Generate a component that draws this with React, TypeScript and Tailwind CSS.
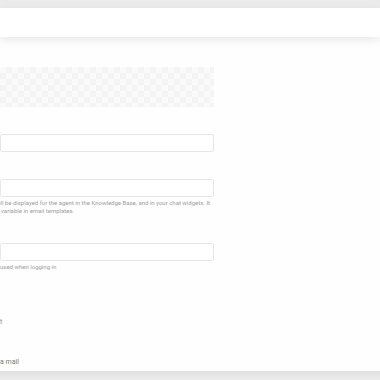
import React from 'react';

const Field = ({ className = '' }: { className?: string }) => (
  <div className={`h-[18px] w-[214px] rounded-[2px] border border-[#e6e6e6] bg-white ${className}`} />
);

const App = () => {
  return (
    <div className="flex h-[380px] w-[380px] flex-col overflow-hidden bg-[#ebebeb] font-['Roboto',sans-serif]">
      <div className="h-[8px] shrink-0 bg-[#ebebeb]" />
      <header className="relative z-10 h-[29px] shrink-0 bg-white shadow-[0_3px_10px_rgba(0,0,0,0.09)]" />
      <main className="flex h-[334px] shrink-0 flex-col bg-[#fefefe]">
        <div className="mt-[30px] h-[40px] w-[214px] bg-[repeating-conic-gradient(#f4f4f4_0%_25%,#fafafa_0%_50%)] bg-[length:12px_12px]" />
        <Field className="mt-[27px]" />
        <Field className="mt-[27px]" />
        <div className="mt-[2px] text-[6px] leading-[8px] text-[#a0a0a0]">
          <p className="-ml-[1px] whitespace-nowrap">
            ill be displayed for the agent in the Knowledge Base, and in your chat widgets. It
          </p>
          <p className="ml-[1px] whitespace-nowrap">variable in email templates.</p>
        </div>
        <Field className="mt-[28px]" />
        <p className="mt-[2px] whitespace-nowrap text-[6px] leading-[8px] text-[#a0a0a0]">
          used when logging in
        </p>
        <p className="mt-[47px] whitespace-nowrap text-[7px] leading-[9px] text-[#8a8a8a]">t</p>
        <p className="mt-[31px] whitespace-nowrap text-[7px] leading-[9px] text-[#7a7a7a]">
          a mail
        </p>
      </main>
      <div className="h-[9px] shrink-0 bg-gradient-to-b from-[#e0e0e0] to-[#ececec]" />
    </div>
  );
};

export default App;
